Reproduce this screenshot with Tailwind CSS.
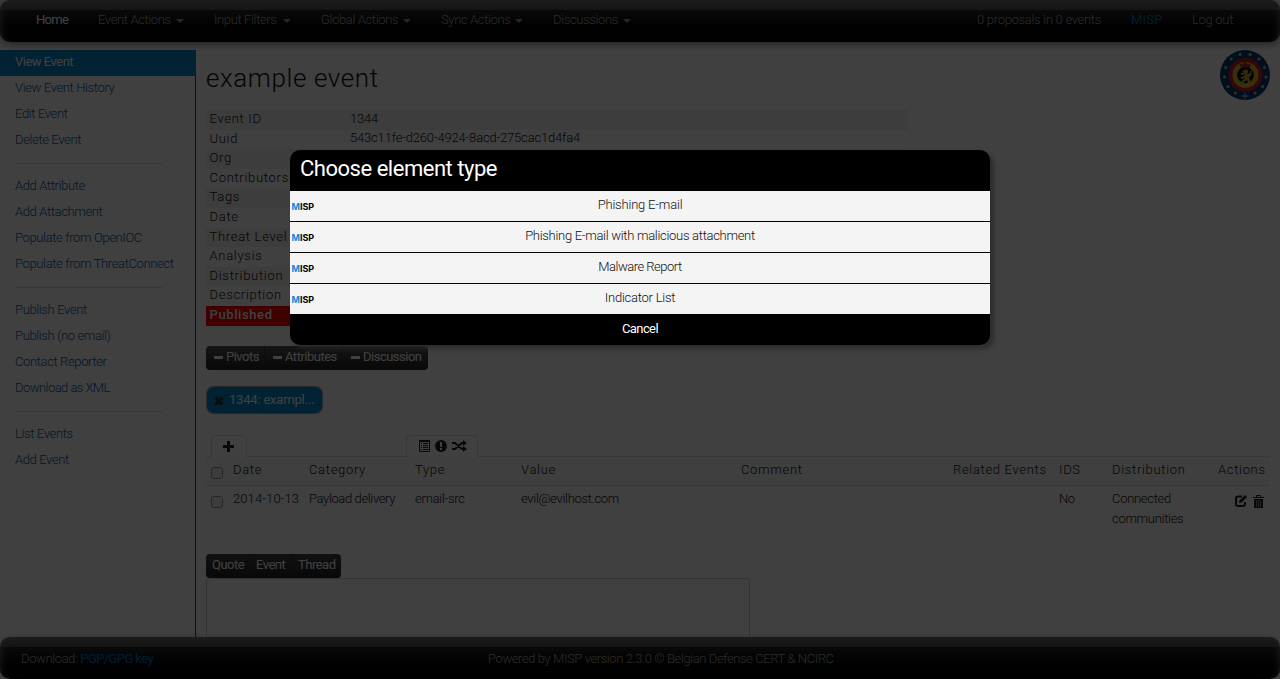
<!DOCTYPE html>
<html lang="en"><head><meta charset="utf-8"><title>example event</title>
<script src="https://cdn.jsdelivr.net/npm/@tailwindcss/browser@4"></script></head>
<body class="h-[679px] overflow-hidden bg-white font-['Roboto',sans-serif] text-[13px] leading-5 font-light text-[#111]">
<div class="relative flex h-[679px] w-[1280px] flex-col overflow-hidden tracking-[-0.37px]">
<header class="z-10 flex h-[42px] shrink-0 rounded-[10px] bg-[linear-gradient(#707070_0,#505050_10px,#282828_10px,#080808_24px,#000_42px)] pr-[46px] pl-[36px] pt-[10px] text-[#aaa] shadow-[0_1px_8px_rgba(0,0,0,.6),inset_8px_0_8px_-8px_#777,inset_-8px_0_8px_-8px_#777]">
<nav class="flex grow items-start whitespace-nowrap">
<a class="w-[62px] font-normal tracking-[-0.7px] text-white">Home</a>
<a class="flex w-[116px] items-center gap-[5px]">Event Actions <i class="mt-0.5 border-x-4 border-t-4 border-x-transparent border-t-[#999]"></i></a>
<a class="flex w-[107px] items-center gap-[6px]">Input Filters <i class="mt-0.5 border-x-4 border-t-4 border-x-transparent border-t-[#999]"></i></a>
<a class="flex w-[120px] items-center gap-[5px]">Global Actions <i class="mt-0.5 border-x-4 border-t-4 border-x-transparent border-t-[#999]"></i></a>
<a class="flex w-[112px] items-center gap-[5px]">Sync Actions <i class="mt-0.5 border-x-4 border-t-4 border-x-transparent border-t-[#999]"></i></a>
<a class="flex items-center gap-[5px]">Discussions <i class="mt-0.5 border-x-4 border-t-4 border-x-transparent border-t-[#999]"></i></a>
</nav>
<div class="flex whitespace-nowrap"><a class="w-[154px] tracking-[-0.3px]">0 proposals in 0 events</a><a class="w-[61px] font-normal tracking-[0.2px] text-[#087a98]">MISP</a><a class="w-[42px] tracking-[-0.3px]">Log out</a></div>
</header>
<main class="flex min-h-0 grow pt-2">
<aside class="w-[196px] shrink-0 border-r border-[#333] text-[#0058a8]">
<ul class="*:h-[26px] *:pl-[15px] *:pt-[2px]"><li class="-mr-px bg-[#08c] font-normal tracking-[-0.5px] text-white">View Event</li><li>View Event History</li><li>Edit Event</li><li>Delete Event</li></ul>
<hr class="my-[9px] ml-[15px] w-[148px] border-t border-b border-t-[#e0e0e0] border-b-white">
<ul class="*:h-[26px] *:pl-[15px] *:pt-[2px]"><li>Add Attribute</li><li>Add Attachment</li><li>Populate from OpenIOC</li><li>Populate from ThreatConnect</li></ul>
<hr class="my-[9px] ml-[15px] w-[148px] border-t border-b border-t-[#e0e0e0] border-b-white">
<ul class="*:h-[26px] *:pl-[15px] *:pt-[2px]"><li>Publish Event</li><li>Publish (no email)</li><li>Contact Reporter</li><li class="tracking-[-0.55px]">Download as XML</li></ul>
<hr class="my-[9px] ml-[15px] w-[148px] border-t border-b border-t-[#e0e0e0] border-b-white">
<ul class="*:h-[26px] *:pl-[15px] *:pt-[2px]"><li>List Events</li><li>Add Event</li></ul>
</aside>
<section class="flex w-[1074px] flex-col pl-[10px]">
<div class="flex h-[60px] shrink-0 justify-between">
<h1 class="pt-2 text-[26px] leading-10 tracking-[0.6px]">example event</h1>
<svg class="size-[50px]" viewBox="0 0 50 50"><circle cx="25" cy="25" r="25" fill="#003a80"/><g fill="#e8cf30"><circle cx="20" cy="4.5" r="1.5"/><circle cx="30" cy="4.5" r="1.5"/><circle cx="11.200" cy="9" r="1.500"/><circle cx="39" cy="9" r="1.500"/><circle cx="5.700" cy="17.500" r="1.500"/><circle cx="44.500" cy="17.500" r="1.500"/><circle cx="4.500" cy="27" r="1.500"/><circle cx="46" cy="27" r="1.500"/><circle cx="8" cy="36.500" r="1.500"/><circle cx="42.500" cy="36.500" r="1.500"/><circle cx="15.500" cy="43" r="1.500"/><circle cx="35" cy="43" r="1.500"/></g><path d="M25 42.500v7M21.500 46h7" stroke="#9ab" stroke-width="1.300"/><circle cx="25.500" cy="25" r="17" fill="#c81c30"/><circle cx="25.500" cy="25" r="13" fill="#d8bc20"/><circle cx="25.500" cy="25" r="8.300" fill="#000"/><path d="M20.500 17.500l-1-4 3 1 2.500-3 3 3 3-1-1 4z" fill="#a43028"/><path d="M22 20l2 1 1-2 3 1v2l-1 2 3-1 1-3 1 1-1 5-2 1 1 3 1 3h-3l-1-3-3 2-1 2h-2l1-3 3-3-3 1-2-1 1-1 3-1 1-2-3 1-2-1 1-1 2 0z" fill="#c8a828"/></svg>
</div>
<div class="grid h-[216px] w-[702px] shrink-0 auto-rows-[19.6px] tracking-[0.7px] *:flex *:pl-[3.5px] *:leading-[18.4px] *:odd:bg-[#f2f2f2]">
<div><b class="w-[140.5px] font-light">Event ID</b><span class="tracking-[-0.2px]">1344</span></div>
<div><b class="w-[140.5px] font-light">Uuid</b><span class="-mt-px tracking-[-0.18px]">543c11fe-d260-4924-8acd-275cac1d4fa4</span></div>
<div>Org</div><div>Contributors</div><div>Tags</div><div>Date</div><div>Threat Level</div><div>Analysis</div><div>Distribution</div><div>Description</div>
<div class="bg-[#f00]! font-medium tracking-[0.6px] text-white">Published</div>
</div>
<div class="mt-5 flex h-6 w-[222px] shrink-0 rounded bg-linear-to-b from-[#555] to-[#222] leading-[22px] font-normal tracking-[-0.5px] text-white">
<div class="flex h-[22px] w-[59px] items-center border-r border-[#333] pl-2"><i class="mr-[3px] h-[3px] w-[9px] bg-white"></i>Pivots</div>
<div class="flex h-[22px] w-[78px] items-center border-r border-[#333] pl-2"><i class="mr-[3px] h-[3px] w-[9px] bg-white"></i>Attributes</div>
<div class="flex h-[22px] items-center pl-2"><i class="mr-[3px] h-[3px] w-[9px] bg-white"></i>Discussion</div>
</div>
<div class="mt-[17px] ml-px flex h-[26px] w-[115px] shrink-0 rounded-[7px] bg-[#08c] pl-[7px] leading-[25px] font-normal tracking-[-0.2px] text-white shadow-[0_0_1px_1px_#999]">
<svg class="mt-[9px] mr-[5px] size-[10px]" viewBox="0 0 10 10"><path d="M1.500 1.500l7 7M8.500 1.500l-7 7" stroke="#333" stroke-width="3.200"/></svg>1344: exampl...</div>
<div class="mt-[22px] flex h-[22px] shrink-0 border-b border-[#ddd] pl-[5px]">
<div class="mr-[159px] h-[22px] w-[36px] rounded-t-[5px] border border-b-0 border-[#ddd] bg-white pl-[11px] pt-[5px]"><svg class="size-[11px]" viewBox="0 0 11 11"><path d="M5.500 0v11M0 5.500h11" stroke="#222" stroke-width="3"/></svg></div>
<div class="flex h-[22px] w-[72px] gap-[5px] rounded-t-[5px] border border-b-0 border-[#ddd] bg-white pl-[12px] pt-[4px]">
<svg class="h-[12px] w-[11px]" viewBox="0 0 11 12" fill="none" stroke="#222"><path d="M.5.5h10v11H.5zM2 3.500h1M4 3.500h5M2 5.500h1M4 5.500h5M2 7.500h1M4 7.500h5M2 9.500h1M4 9.500h5M1 1.500h9"/></svg>
<svg class="size-[12px]" viewBox="0 0 12 12"><circle cx="6" cy="6" r="6" fill="#222"/><path d="M6 2v5M6 8v2" stroke="#fff" stroke-width="2"/></svg>
<svg class="h-[12px] w-[15px]" viewBox="0 0 15 12"><path d="M0 3h3l7 6h2M0 9h3l7-6h2" fill="none" stroke="#222" stroke-width="2"/><path d="M11 0l4 3-4 3zM11 6l4 3-4 3z" fill="#222"/></svg>
</div></div>
<div class="grid shrink-0 grid-cols-[27px_76px_106px_106px_220px_212px_106px_53px_106px_52px] whitespace-nowrap">
<div class="col-span-10 grid h-[29px] grid-cols-subgrid border-b border-[#ddd] bg-[#fbfbfb] pt-[3px] tracking-[0.680px]"><i class="mt-[7px] ml-[5px] size-3 rounded-[3px] border border-[#999] bg-[#f4f4f4]"></i><span>Date</span><span>Category</span><span>Type</span><span>Value</span><span>Comment</span><span>Related Events</span><span>IDS</span><span>Distribution</span><span>Actions</span></div>
<div class="col-span-10 grid h-[68px] grid-cols-subgrid pt-[3px]"><i class="mt-[7px] ml-[5px] size-3 rounded-[3px] border border-[#999] bg-[#f4f4f4]"></i><span class="tracking-[0.1px]">2014-10-13</span><span>Payload delivery</span><span class="tracking-[-0.3px] text-[#114]">email-src</span><span class="tracking-[-0.3px]">evil@evilhost.com</span><span></span><span></span><span>No</span><span class="tracking-[-0.3px]">Connected<br>communities</span>
<span class="flex gap-[6px] pt-[6px] pl-[17px]"><svg class="size-[12px]" viewBox="0 0 12 12"><path d="M7 1.500H3Q1 1.500 1 3.500v5.500q0 2 2 2h5q2 0 2-2V7" fill="none" stroke="#222" stroke-width="2"/><path d="M4 8l.5-2.500L10 0l2 2-5.500 5.500z" fill="#222"/></svg><svg class="h-[13px] w-[11px]" viewBox="0 0 11 13"><path d="M0 2.500h11M3.500 2V.5h4V2" stroke="#222" fill="none"/><path d="M1 4h9v9H1z" fill="#222"/><path d="M3.500 5v7M5.500 5v7M7.500 5v7" stroke="#aaa" stroke-width=".8"/></svg></span></div>
</div>
<div class="flex h-6 w-[135px] shrink-0 rounded bg-linear-to-b from-[#444] to-[#222] leading-[22px] font-normal tracking-[-0.5px] text-white *:h-[22px] *:border-[#333]"><span class="w-[44px] border-r pl-[6px]">Quote</span><span class="w-[42px] border-r pl-[6px]">Event</span><span class="pl-[6px]">Thread</span></div>
<div class="h-[80px] w-[544px] shrink-0 rounded border border-[#ccc]"></div>
</section>
</main>
<footer class="z-10 flex h-[42px] shrink-0 rounded-[10px] bg-[linear-gradient(#707070_0,#505050_10px,#282828_10px,#080808_24px,#000_42px)] pl-[21px] pt-3 text-[#aaa] shadow-[0_-1px_4px_rgba(0,0,0,.15),inset_8px_0_8px_-8px_#777,inset_-8px_0_8px_-8px_#777]"><div class="w-[467px]">Download: <a class="tracking-[-0.6px] font-normal text-[#0078c8]">PGP/GPG key</a></div><div class="tracking-[-0.410px] whitespace-nowrap">Powered by MISP version 2.3.0 © Belgian Defense CERT &amp; NCIRC</div></footer>
<div class="absolute inset-0 z-20 bg-black/75"></div>
<div class="absolute top-[150px] left-[290px] z-30 w-[700px] overflow-hidden rounded-[10px] bg-black shadow-[4px_4px_4px_rgba(40,40,40,.8)]">
<h2 class="h-[41px] pl-[10px] text-[22px] leading-[38px] font-normal tracking-[-0.480px] text-white">Choose element type</h2>
<ul class="divide-y divide-black bg-[#f4f4f4] tracking-[-0.300px] text-[#111] *:grid *:h-[31px] *:grid-cols-[100px_500px_100px] *:pt-[4px] *:text-center *:last:h-[30px]">
<li><b class="pl-[1.5px] text-left font-['Inter'] text-[9px] leading-[24px] font-bold tracking-[0] text-black"><span class="text-[#18d]">M</span>ISP</b><span class="tracking-[-0.2px]">Phishing E-mail</span></li>
<li><b class="pl-[1.5px] text-left font-['Inter'] text-[9px] leading-[24px] font-bold tracking-[0] text-black"><span class="text-[#18d]">M</span>ISP</b>Phishing E-mail with malicious attachment</li>
<li><b class="pl-[1.5px] text-left font-['Inter'] text-[9px] leading-[24px] font-bold tracking-[0] text-black"><span class="text-[#18d]">M</span>ISP</b><span class="tracking-[-0.5px]">Malware Report</span></li>
<li><b class="pl-[1.5px] text-left font-['Inter'] text-[9px] leading-[24px] font-bold tracking-[0] text-black"><span class="text-[#18d]">M</span>ISP</b><span class="tracking-[-0.25px]">Indicator List</span></li>
</ul>
<div class="h-[31px] text-center leading-[30px] font-normal tracking-[-0.6px] text-white">Cancel</div>
</div>
</div></body></html>
